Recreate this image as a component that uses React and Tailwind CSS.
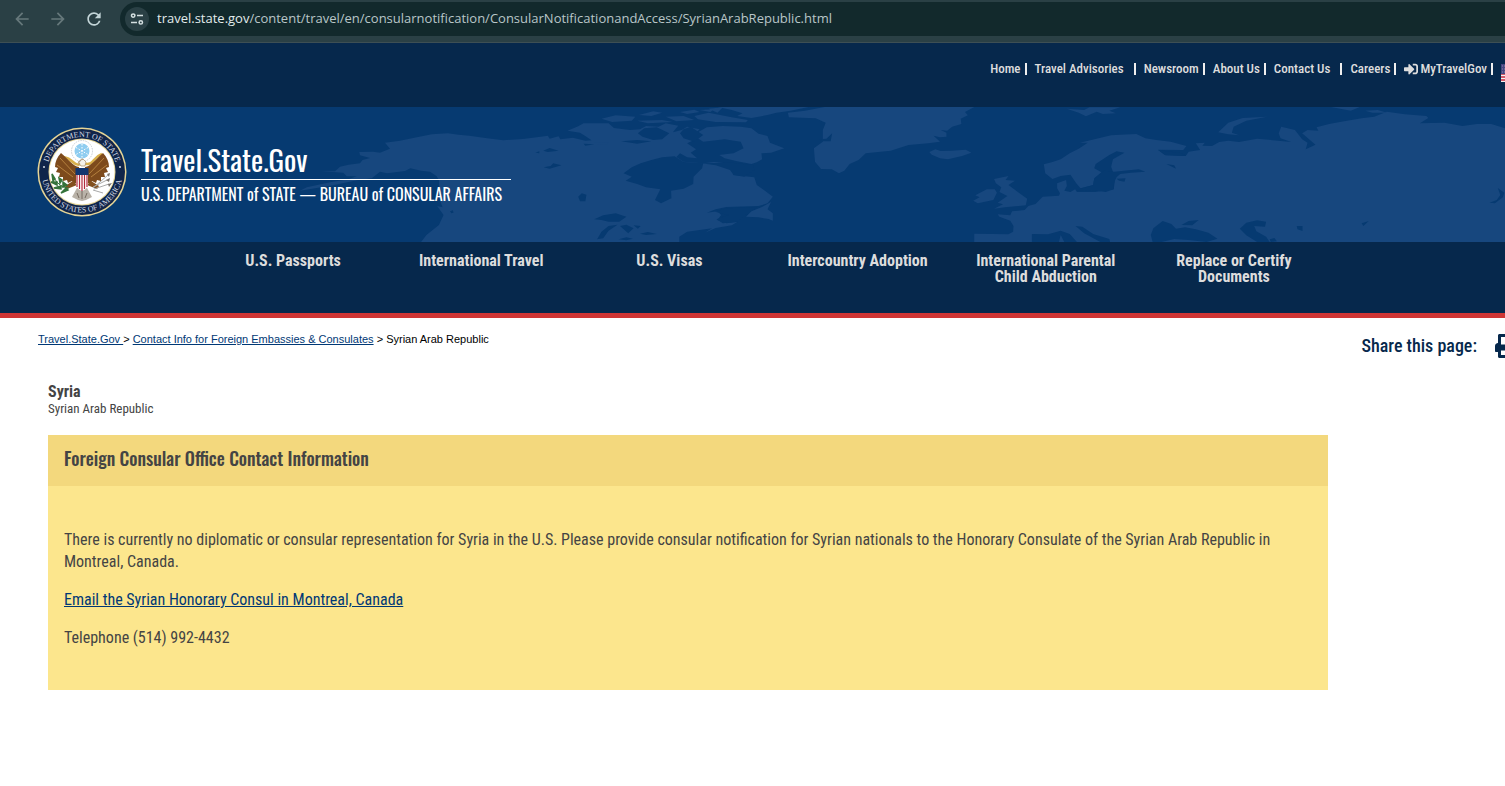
import React from "react";
import { FaPrint, FaSignInAlt } from "react-icons/fa";
import { MdArrowBack, MdArrowForward, MdRefresh } from "react-icons/md";

const topLinks = [
  { label: "Home", pad: "pr-1" },
  { label: "Travel Advisories", pad: "pr-2.5" },
  { label: "Newsroom", pad: "pr-1" },
  { label: "About Us", pad: "pr-1" },
  { label: "Contact Us", pad: "pr-2.5" },
  { label: "Careers", pad: "pr-1" },
  { label: "MyTravelGov", pad: "pr-1", icon: true },
];

const mainLinks = [
  "U.S. Passports",
  "International Travel",
  "U.S. Visas",
  "Intercountry Adoption",
  "International Parental Child Abduction",
  "Replace or Certify Documents",
];

function BrowserBar() {
  return (
    <div className="flex h-[43px] items-start border-b border-[#3d4f54] bg-[#2a4045] pl-3">
      <div className="flex h-[38px] items-center gap-4 text-xl">
        <button type="button" aria-label="Back" className="text-[#66787b]">
          <MdArrowBack className="h-5 w-5" />
        </button>
        <button type="button" aria-label="Forward" className="text-[#66787b]">
          <MdArrowForward className="h-5 w-5" />
        </button>
        <button type="button" aria-label="Reload" className="text-[#c3d5d8]">
          <MdRefresh className="h-5 w-5" />
        </button>
      </div>
      <div className="mt-0.5 ml-4 flex h-[34px] flex-1 items-center rounded-l-full bg-[#12292c] pl-[5px] font-['Open_Sans',sans-serif] text-[13px]">
        <button
          type="button"
          aria-label="View site information"
          className="mr-2 flex h-6 w-6 shrink-0 items-center justify-center rounded-full bg-[#2a4045]"
        >
          <svg viewBox="0 0 14 14" className="h-3.5 w-3.5" fill="none" stroke="#d5e0e1" strokeWidth="1.5">
            <circle cx="3.2" cy="3.6" r="1.7" />
            <path d="M7 3.6h6M1 10.4h6" />
            <circle cx="10.8" cy="10.4" r="1.7" />
          </svg>
        </button>
        <label htmlFor="address" className="text-[#e3eced]">
          travel.state.gov
        </label>
        <input
          id="address"
          type="text"
          readOnly
          value="/content/travel/en/consularnotification/ConsularNotificationandAccess/SyrianArabRepublic.html"
          className="min-w-0 flex-1 bg-transparent text-[#b9c6c8] outline-none"
        />
      </div>
    </div>
  );
}

function Flag() {
  return (
    <svg viewBox="0 0 24 18" className="h-[18px] w-6 shrink-0">
      <rect width="24" height="18" fill="#f2f2f2" />
      <path d="M0 1h24M0 4h24M0 7h24M0 10h24M0 13h24M0 16h24" stroke="#c8283c" strokeWidth="1.5" />
      <rect width="11" height="10" fill="#46467f" />
      <path d="M1 2h9M1 5h9M1 8h9" stroke="#8a8ab0" strokeWidth="1" strokeDasharray="1 1" />
    </svg>
  );
}

function TopNav() {
  return (
    <nav className="flex h-16 justify-start overflow-hidden bg-[#06284c] font-['Roboto_Condensed',sans-serif]">
      <ul className="-mr-5 ml-auto flex h-[52px] shrink-0 items-center text-[13px] font-medium text-[#dddddd]">
        {topLinks.map((link) => (
          <li key={link.label} className="flex items-center">
            <a href="#" className={`flex items-center gap-0.5 ${link.pad}`}>
              {link.icon && <FaSignInAlt className="h-3.5 w-3.5" />}
              {link.label}
            </a>
            <span className="mr-2 h-3 w-0.5 bg-[#eeeeee]" />
          </li>
        ))}
        <li className="mt-2">
          <a href="#" aria-label="English">
            <Flag />
          </a>
        </li>
      </ul>
    </nav>
  );
}

// world map behind the logo, land first and then the lakes and bays on top
function WorldMap() {
  return (
    <svg viewBox="0 0 4515 405" className="absolute top-0 left-0 h-full w-auto max-w-none" fill="#17477e">
      <g transform="translate(1140 -21) scale(1.0714 1)">
        <path d="M115 426L130 405L165 375L178 345L160 318L175 322L165 290V240L158 228L140 215L115 212L85 205L70 213L20 220L0 215L-23 235L-61 240L-98 248L-131 256L-224 272L-205 262L-140 247L-89 238L-65 229L-93 229L-103 218L-165 214L-126 214L-112 200L-88 194L-56 190L-49 180L-28 174L-56 166L-58 156L-19 155L0 158L28 146L14 128L56 122L110 110L145 103L190 100L220 104L250 107L300 115L345 121L400 117L450 110L470 107L475 116L500 109L505 118L540 113L575 122L592 121L578 110L560 98L525 92L555 79L570 70L640 70L655 84L700 90L728 88L745 78L780 80L800 70L835 77L820 97L845 90L860 80L895 88L880 103L915 82L960 78L1010 80L1040 85L1060 101L1085 108L1092 128L1132 145L1095 158L1068 160L1070 178L1055 187L1040 192L1000 184L965 175L950 165L925 168L990 160L1018 145L1010 125L965 118L905 125L890 115L860 130L885 148L870 158L888 175L860 172L840 160L830 171L850 185L905 190L935 186L970 190L985 205L990 225L1048 232L1055 255L1075 270L1100 290L1085 310L1060 318L970 321L940 328L915 338L945 334L955 345L945 360L970 370L1000 366L985 376L940 384L910 398L930 385L860 395L838 410V426Z" />
        <path d="M1025 350L1040 334L1068 322L1095 306L1085 328L1100 340V362L1088 357L1060 352Z" />
        <path d="M945 21H1200L1150 32L1110 38L1085 45L1060 50L1040 54L1000 48L1015 40L985 30Z" />
        <path d="M620 56L660 46L715 50L705 62L650 66ZM725 45L765 34L790 38L760 48ZM720 62L790 60L820 66L750 70ZM840 36L880 29L895 36L860 42ZM880 48L920 38L985 52L1030 60L1025 67L940 66L890 58ZM800 50L850 48L880 60L830 64ZM895 30L935 28L925 36ZM600 128L640 126L636 133L604 132ZM920 26L960 22L945 38Z" />
        <path d="M1142 38L1190 32L1245 21H1664L1638 36L1646 46L1626 56L1628 72L1602 80L1588 92L1570 90L1586 98V110L1568 112L1550 107L1568 125L1535 130L1480 135L1430 152L1360 160L1340 180L1315 192L1300 212L1285 220L1265 208L1235 207L1218 185L1215 145L1240 125L1240 90L1248 68L1220 55L1145 52Z" />
        <path d="M1538 156L1555 148L1570 153L1600 152L1640 149L1656 158L1630 168L1590 178L1568 175L1545 164Z" />
        <g fill="#063a71">
          <path d="M682 220L705 202L730 190L760 180L790 172L825 169L850 186L905 190L902 205L878 230L877 252L850 266L815 272L816 295L787 310L770 300L785 268L745 262L720 252L688 242L705 230Z" />
          <path d="M722 100L740 85L775 82L810 100L790 118L765 120L735 110ZM850 88L870 80L905 105L880 125L850 115L840 100ZM675 124L720 120L760 124L720 131Z" />
          <path d="M900 190L985 188L1045 195L1048 210L1020 230L990 225L980 210L940 196Z" />
          <path d="M600 358L625 346L660 340L690 350L670 365L640 365L620 360ZM608 418L620 395L640 378L665 374L640 392L625 415ZM672 378L690 374L710 385L695 400ZM710 376L730 378L722 386ZM668 418L690 412L708 416L690 421ZM728 401L750 396L775 402L745 405Z" />
          <path d="M555 290L565 280L578 284L575 304L560 304ZM457 152L475 144L500 152L470 156ZM458 202L478 198L485 190L508 196L475 206ZM435 158L446 154L446 160ZM196 334L204 331L206 338L200 340ZM1230 118L1250 116L1266 100L1262 124L1238 124ZM570 131L600 133L575 137Z" />
          <path d="M938 335L970 325L1055 322L1020 348L1000 365L960 370L942 358L975 345Z" />
        </g>
      </g>
      <g transform="translate(2820 -21) scale(1.081 1)">
        <path d="M95 426V401L190 403L203 395L204 378L195 362L165 350L160 343L195 346L200 334L235 330L245 318L265 312L285 290L330 287L333 280L325 265V250L350 240L352 258L345 272L362 276L375 268L380 276L430 276L482 268L485 245L480 215L475 200L480 178L512 158L490 154L470 165L432 192L428 205L448 217L428 235L425 255L390 265L378 250L362 224L335 228L312 237L292 220L288 193L310 187L335 178L360 160L385 146L410 128L388 128L420 120L475 106L500 104L545 102L570 115L600 120L640 125L684 138L675 150L605 149L625 165L682 168L690 155L722 150L710 130L735 128L728 137L755 138L775 126L800 122L830 126L880 116L975 126L945 115L940 100L947 80L985 90L1005 118L1020 128L1015 148L1042 134L1005 100L1020 90L1050 92L1045 82L1080 72L1110 66L1170 55L1205 50L1240 35L1290 43L1350 48L1355 54L1332 70L1400 68L1450 78L1490 72L1530 72L1568 85V426Z" />
        <path d="M150 237L190 228L182 240L208 242L190 255L215 275L242 296L238 316L180 322L150 326L175 313L160 308L187 288L165 276L170 262L155 250ZM92 302L110 292L98 286L130 268L152 268L158 278L148 300L105 310Z" />
        <path d="M352 26L400 30L415 22H500L470 32L488 40L452 42L435 35L405 49L385 38ZM772 97L800 68L840 54L908 50L850 62L815 80L810 98L830 106L800 103ZM1085 21H1165L1140 32ZM1180 32L1215 30L1240 38L1200 38Z" />
        <g fill="#063a71">
          <path d="M490 232L500 222L530 218L570 215L552 208L510 212L484 215L455 212L428 237L425 256L395 264L380 272L420 270L460 276L482 268L482 250ZM490 236L515 235L512 245L497 242ZM605 150L670 160L682 168L625 166ZM628 192L650 196L655 206Z" />
          <path d="M585 405L592 385L618 363L642 372L655 386L680 382L710 388L745 398L770 416L740 426L690 420L650 417L615 426H590ZM670 375L690 363L718 360L700 376ZM832 386L850 368L880 361L905 365L902 380L872 378L878 394L905 410L915 426H880L850 406ZM915 418L928 414L935 424L918 426ZM990 378L1006 378V393L992 388ZM1170 370L1190 363L1175 378ZM376 378L395 380L425 402L470 417L472 426H445L400 400ZM255 426V402L300 403L335 392L360 402L380 426H345L335 405L330 426ZM1525 308L1545 300L1555 285L1548 264L1566 278L1562 292L1540 310Z" />
        </g>
      </g>
    </svg>
  );
}

function Seal() {
  return (
    <svg viewBox="0 0 90 90" className="h-[90px] w-[90px] shrink-0" role="img" aria-label="Department of State seal">
      <defs>
        <path id="arcTop" d="M10 45a35 35 0 0 1 70 0" />
        <path id="arcBottom" d="M4.500 45a40.500 40.500 0 0 0 81 0" />
      </defs>
      <circle cx="45" cy="45" r="44.500" fill="#e6d596" />
      <circle cx="45" cy="45" r="43" fill="#10254a" />
      <circle cx="45" cy="45" r="33.500" fill="#e6d596" />
      <circle cx="45" cy="45" r="32.500" fill="#fff" />
      <g fill="#d5dbe5" fontFamily="Liberation Serif, serif" fontSize="8">
        <text textAnchor="middle">
          <textPath href="#arcTop" startOffset="50%">DEPARTMENT OF STATE</textPath>
        </text>
        <text textAnchor="middle">
          <textPath href="#arcBottom" startOffset="50%">UNITED STATES OF AMERICA</textPath>
        </text>
      </g>
      <circle cx="7" cy="40" r="1" fill="#d5dbe5" />
      <circle cx="83" cy="40" r="1" fill="#d5dbe5" />
      {/* glory and stars */}
      <circle cx="45" cy="24" r="10.500" fill="#fff" stroke="#c9ced3" strokeDasharray="1.500 1" />
      <circle cx="45" cy="24" r="7.500" fill="#8fcdf0" />
      <path d="M45 17v14M39 20.500l12 7M51 20.500l-12 7" stroke="#fff" strokeWidth="1" strokeDasharray="1.500 1.500" />
      {/* ribbon */}
      <path d="M26 30q6 1 10 5t8 2q3-1 6 0 4 0 7-4t8-6" fill="none" stroke="#d9b04b" strokeWidth="2.500" />
      {/* wings */}
      <path d="M42 40c-6-1-10-7-18-14-4 4-6 9-6 14l3 1-2 4 4 1-1 4 4 0 0 4 4-1 1 3 4-2 2 3 6-3z" fill="#7d4a1c" />
      <path d="M48 40c6-1 10-7 18-14 4 4 6 9 6 14l-3 1 2 4-4 1 1 4-4 0 0 4-4-1-1 3-4-2-2 3-6-3z" fill="#7d4a1c" />
      <path d="M23 31l15 16M20 38l16 12M67 31L52 47M70 38L54 50" stroke="#b5813f" strokeWidth="1" />
      {/* legs and tail */}
      <path d="M36 54l-8 5 2 3 10-4zM54 54l8 5-2 3-10-4z" fill="#83501f" />
      <path d="M40 61l-5 9 6 3 4 1 4-1 6-3-5-9z" fill="#b9b2a8" />
      <path d="M40 66l2 5M45 62v10M50 66l-2 5" stroke="#756b60" strokeWidth="1" />
      <path d="M42 38q0-6 4-6l-5 3 3 4h4l1-4-3-3" fill="#f4f1ea" stroke="#a58a63" strokeWidth=".7" />
      {/* shield */}
      <path d="M39 43h12v16q-2 4-6 5-4-1-6-5z" fill="#fff" />
      <path d="M40 46v14M42.500 46v16M45 46v18M47.500 46v16M50 46v14" stroke="#b12a3c" strokeWidth="1.200" />
      <path d="M38.500 41h13v7h-13z" fill="#12366f" />
      {/* olive branch and arrows */}
      <path d="M32 61q-9 0-15-10" fill="none" stroke="#35733a" strokeWidth="1" />
      <path d="M18 52l-3-5 1 7zM20 55l-6 0 6 3zM22 51l1 5 2-3zM24 59l-7 2 7 1zM26 55l0 5 4-2zM29 61l-5 5 7-3z" fill="#35733a" stroke="#35733a" strokeWidth="1.500" />
      <path d="M56 61l15-13M56 60l14-7M57 62l15-5M56 63l10 3" stroke="#a9a9a9" strokeWidth="1" />
      <path d="M70 47l3-1-1 4zM69 53l4-2-1 4zM71 57l4-1-3 4z" fill="#77706a" />
    </svg>
  );
}

function Banner() {
  return (
    <header className="relative h-[135px] overflow-hidden bg-[#063a71]">
      <WorldMap />
      <div className="relative flex items-start pt-5 pl-[37px]">
        <Seal />
        <a href="#" className="ml-3.5 block w-[370px] pt-3 font-['Oswald',sans-serif] text-white">
          <span className="block border-b border-white text-[29px] leading-10">Travel.State.Gov</span>
          <span className="block text-base leading-7 whitespace-nowrap">
            U.S. DEPARTMENT of STATE — BUREAU of CONSULAR AFFAIRS
          </span>
        </a>
      </div>
    </header>
  );
}

function MainNav() {
  return (
    <nav className="h-[76px] border-b-[5px] border-[#cf3535] bg-[#06284c] pt-[11px] pr-[177px] pl-[199px] font-['Roboto_Condensed',sans-serif]">
      <ul className="grid grid-cols-6">
        {mainLinks.map((label) => (
          <li key={label} className="px-5 text-center text-base leading-4 font-bold text-[#dddddd]">
            <a href="#">{label}</a>
          </li>
        ))}
      </ul>
    </nav>
  );
}

export default function App() {
  return (
    <div className="overflow-x-hidden bg-white">
      <BrowserBar />
      <TopNav />
      <Banner />
      <MainNav />

      <div className="flex items-start justify-between pt-3 pl-[38px]">
        <p className="font-['Liberation_Sans',sans-serif] text-[11px] leading-[18px] text-black">
          <a href="#" className="text-[#003875] underline">
            Travel.State.Gov&nbsp;
          </a>
          {"> "}
          <a href="#" className="text-[#003875] underline">
            Contact Info for Foreign Embassies &amp; Consulates
          </a>
          {" > "}
          Syrian Arab Republic
        </p>
        <div className="-mr-3.5 flex h-8 items-center gap-[18px] font-['Roboto_Condensed',sans-serif] text-lg font-medium text-[#06284c]">
          <span>Share this page:</span>
          <button type="button" aria-label="Print this page">
            <FaPrint className="h-6 w-6" />
          </button>
        </div>
      </div>

      <main className="mr-[177px] ml-12 pt-5 font-['Roboto_Condensed',sans-serif] text-[#444444]">
        <h1 className="text-base leading-5 font-bold">Syria</h1>
        <p className="text-[13px] leading-[14px]">Syrian Arab Republic</p>

        <section className="mt-[19px] bg-[#fce68d]">
          <h2 className="bg-[#f3d87d] px-4 pt-[9px] pb-3.5 font-['Oswald',sans-serif] text-lg leading-7 font-medium">
            Foreign Consular Office Contact Information
          </h2>
          <div className="space-y-4 px-4 pt-[43px] pb-[41px] text-base leading-[22px]">
            <p>
              There is currently no diplomatic or consular representation for Syria in the U.S. Please provide consular
              notification for Syrian nationals to the Honorary Consulate of the Syrian Arab Republic in Montreal, Canada.
            </p>
            <p>
              <a href="#" className="text-[#003875] underline">
                Email the Syrian Honorary Consul in Montreal, Canada
              </a>
            </p>
            <p>Telephone (514) 992-4432</p>
          </div>
        </section>
      </main>
    </div>
  );
}
